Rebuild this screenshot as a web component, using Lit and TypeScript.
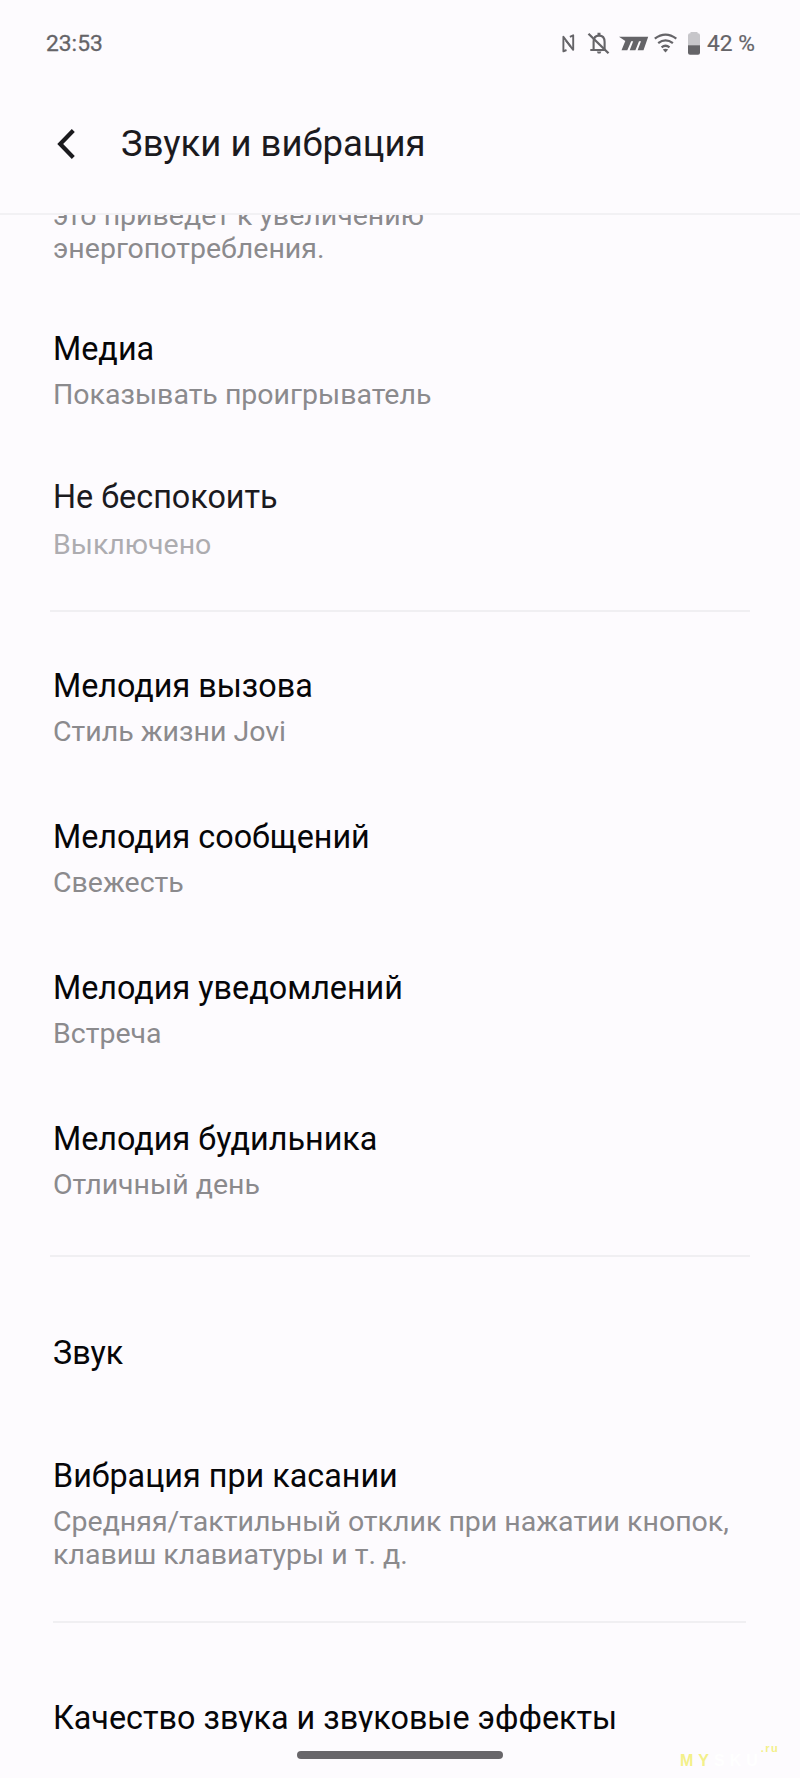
import { LitElement, html, css, nothing } from "lit";
import { customElement, property } from "lit/decorators.js";

@customElement("status-bar")
class StatusBar extends LitElement {
  static styles = css`
    :host {
      display: flex;
      justify-content: space-between;
      align-items: center;
      height: 87px;
      padding: 0 45px 0 46px;
      box-sizing: border-box;
      color: #656468;
      font-size: 22.8px;
      font-weight: 400;
    }
    .time {
      -webkit-text-stroke: 0.3px #656468;
    }
    .icons {
      display: flex;
      align-items: center;
      gap: 7px;
    }
    .glyphs {
      display: block;
      margin-top: -1px;
    }
    .level {
      -webkit-text-stroke: 0.2px #656468;
    }
  `;
  render() {
    return html`
      <span class="time">23:53</span>
      <div class="icons">
        <svg class="glyphs" width="140" height="30" viewBox="560 28 140 30">
          <g fill="none" stroke="#656468" stroke-width="1.900" stroke-linejoin="round">
            <path d="M566.500 50L563.400 51.300V36.800L570.800 46.600" />
            <path d="M569.900 36.800L573.200 35.300V49.800L565.800 40.500" />
          </g>
          <g fill="none" stroke="#656468" stroke-width="2.100">
            <path d="M590.300 50H606M593.600 50V42Q593.600 35.600 599 35.600Q604.600 35.600 604.600 42V50" />
            <path d="M588.500 33.800L608.500 53.300" stroke-width="2.300" />
          </g>
          <path d="M597.500 32.700h3v2.500h-3zM596.800 51.500h4.600l-1 2h-2.600z" fill="#656468" />
          <path d="M619 36.700H648.200L643.500 50.200H637.600L641 41.200H639L635.400 50.200H629.700L633.200 41.200H631.200L627.300 50.200H621.500L625.300 41Z" fill="#656468" />
          <path d="M654.800 38.600Q665.500 30.600 676.300 38.600M658.200 43.100Q665.500 37.600 672.900 43.100M661.600 47.400Q665.500 44.200 669.500 47.400" fill="none" stroke="#656468" stroke-width="2.300" />
          <path d="M662.800 49.600q2.700-1.600 5.400 0l-2.700 3z" fill="#656468" />
          <path d="M690.500 32h7v1.300h.5q2 0 2 2V45.500H688V35.300q0-2 2-2h.5z" fill="#c7c6ca" />
          <path d="M688 45.300h12V52.700q0 2-2 2H690q-2 0-2-2z" fill="#656468" />
        </svg>
        <span class="level">42 %</span>
      </div>
    `;
  }
}

@customElement("setting-row")
class SettingRow extends LitElement {
  @property() heading = "";
  @property() value = "";
  static styles = css`
    :host {
      display: block;
    }
    .heading {
      font-size: 32.35px;
      line-height: 40px;
      color: var(--heading, #060608);
      white-space: nowrap;
    }
    .value {
      font-size: 28.5px;
      line-height: 33.5px;
      margin-top: var(--gap, 8.5px);
      color: var(--value, #8b8a8d);
    }
  `;
  render() {
    return html`
      <div class="heading">${this.heading}</div>
      ${this.value ? html`<div class="value">${this.value}</div>` : nothing}
    `;
  }
}

@customElement("app-root")
class AppRoot extends LitElement {
  static styles = css`
    :host {
      display: flex;
      flex-direction: column;
      position: relative;
      width: 800px;
      height: 1778px;
      overflow: hidden;
      background: #fdfbfe;
      font-family: Roboto, sans-serif;
    }
    .header {
      display: flex;
      align-items: center;
      height: 126px;
      padding: 0 0 0 57px;
      gap: 46px;
      border-bottom: 2px solid #f2f1f4;
      color: #1b1a1e;
    }
    .arrow,
    .title {
      margin: 0 0 13px;
    }
    .title {
      font-size: 36.5px;
      line-height: 44px;
      font-weight: 400;
    }
    .list {
      height: 1517px;
      overflow: hidden;
      padding: 0 50px 0 53px;
      box-sizing: border-box;
    }
    .note {
      margin: -16.5px 0 63.5px;
      width: 440px;
      font-size: 28.5px;
      line-height: 33.5px;
      color: #8b8a8d;
    }
    .dnd {
      margin-top: 65.5px;
      --heading: #1b1a1e;
      --value: #adacb0;
      --gap: 11px;
    }
    .rule {
      height: 2px;
      margin: 49px 0 54px -3px;
      background: #f0eff2;
    }
    .melodies {
      display: grid;
      gap: 69px;
    }
    .rule.second {
      margin: 53.5px 0 76px -3px;
    }
    .touch {
      margin-top: 83.5px;
    }
    .rule.third {
      margin: 49px 4px 75px 0;
    }
    .handle {
      width: 206px;
      height: 8px;
      border-radius: 4px;
      background: #68666a;
      margin: 19px 0 0 297px;
    }
    .mark {
      position: absolute;
      left: 680px;
      top: 1752px;
      display: flex;
      font: 900 16px/18px "Liberation Sans", Roboto, sans-serif;
      letter-spacing: 5px;
      color: #f3f08a;
    }
    .mark .shop {
      color: #fff;
    }
    .mark .zone {
      font-size: 11px;
      line-height: 10px;
      letter-spacing: 1.5px;
      margin: -9px 0 0 -2px;
    }
  `;
  render() {
    return html`
      <status-bar></status-bar>
      <div class="header">
        <svg class="arrow" width="18" height="32" viewBox="0 0 18 32">
          <path d="M16.300 2.500L3.200 16L16.300 29.500" fill="none" stroke="#1b1a1e" stroke-width="4.200" />
        </svg>
        <h1 class="title">Звуки и вибрация</h1>
      </div>
      <div class="list">
        <p class="note">это приведет к увеличению<br />энергопотребления.</p>
        <setting-row heading="Медиа" value="Показывать проигрыватель"></setting-row>
        <setting-row class="dnd" heading="Не беспокоить" value="Выключено"></setting-row>
        <div class="rule"></div>
        <div class="melodies">
          <setting-row heading="Мелодия вызова" value="Стиль жизни Jovi"></setting-row>
          <setting-row heading="Мелодия сообщений" value="Свежесть"></setting-row>
          <setting-row heading="Мелодия уведомлений" value="Встреча"></setting-row>
          <setting-row heading="Мелодия будильника" value="Отличный день"></setting-row>
        </div>
        <div class="rule second"></div>
        <setting-row heading="Звук"></setting-row>
        <setting-row class="touch" heading="Вибрация при касании" value="Средняя/тактильный отклик при нажатии кнопок, клавиш клавиатуры и т. д."></setting-row>
        <div class="rule third"></div>
        <setting-row heading="Качество звука и звуковые эффекты"></setting-row>
      </div>
      <div class="handle"></div>
      <div class="mark"><span>MY</span><span class="shop">SKU</span><span class="zone">.ru</span></div>
    `;
  }
}
